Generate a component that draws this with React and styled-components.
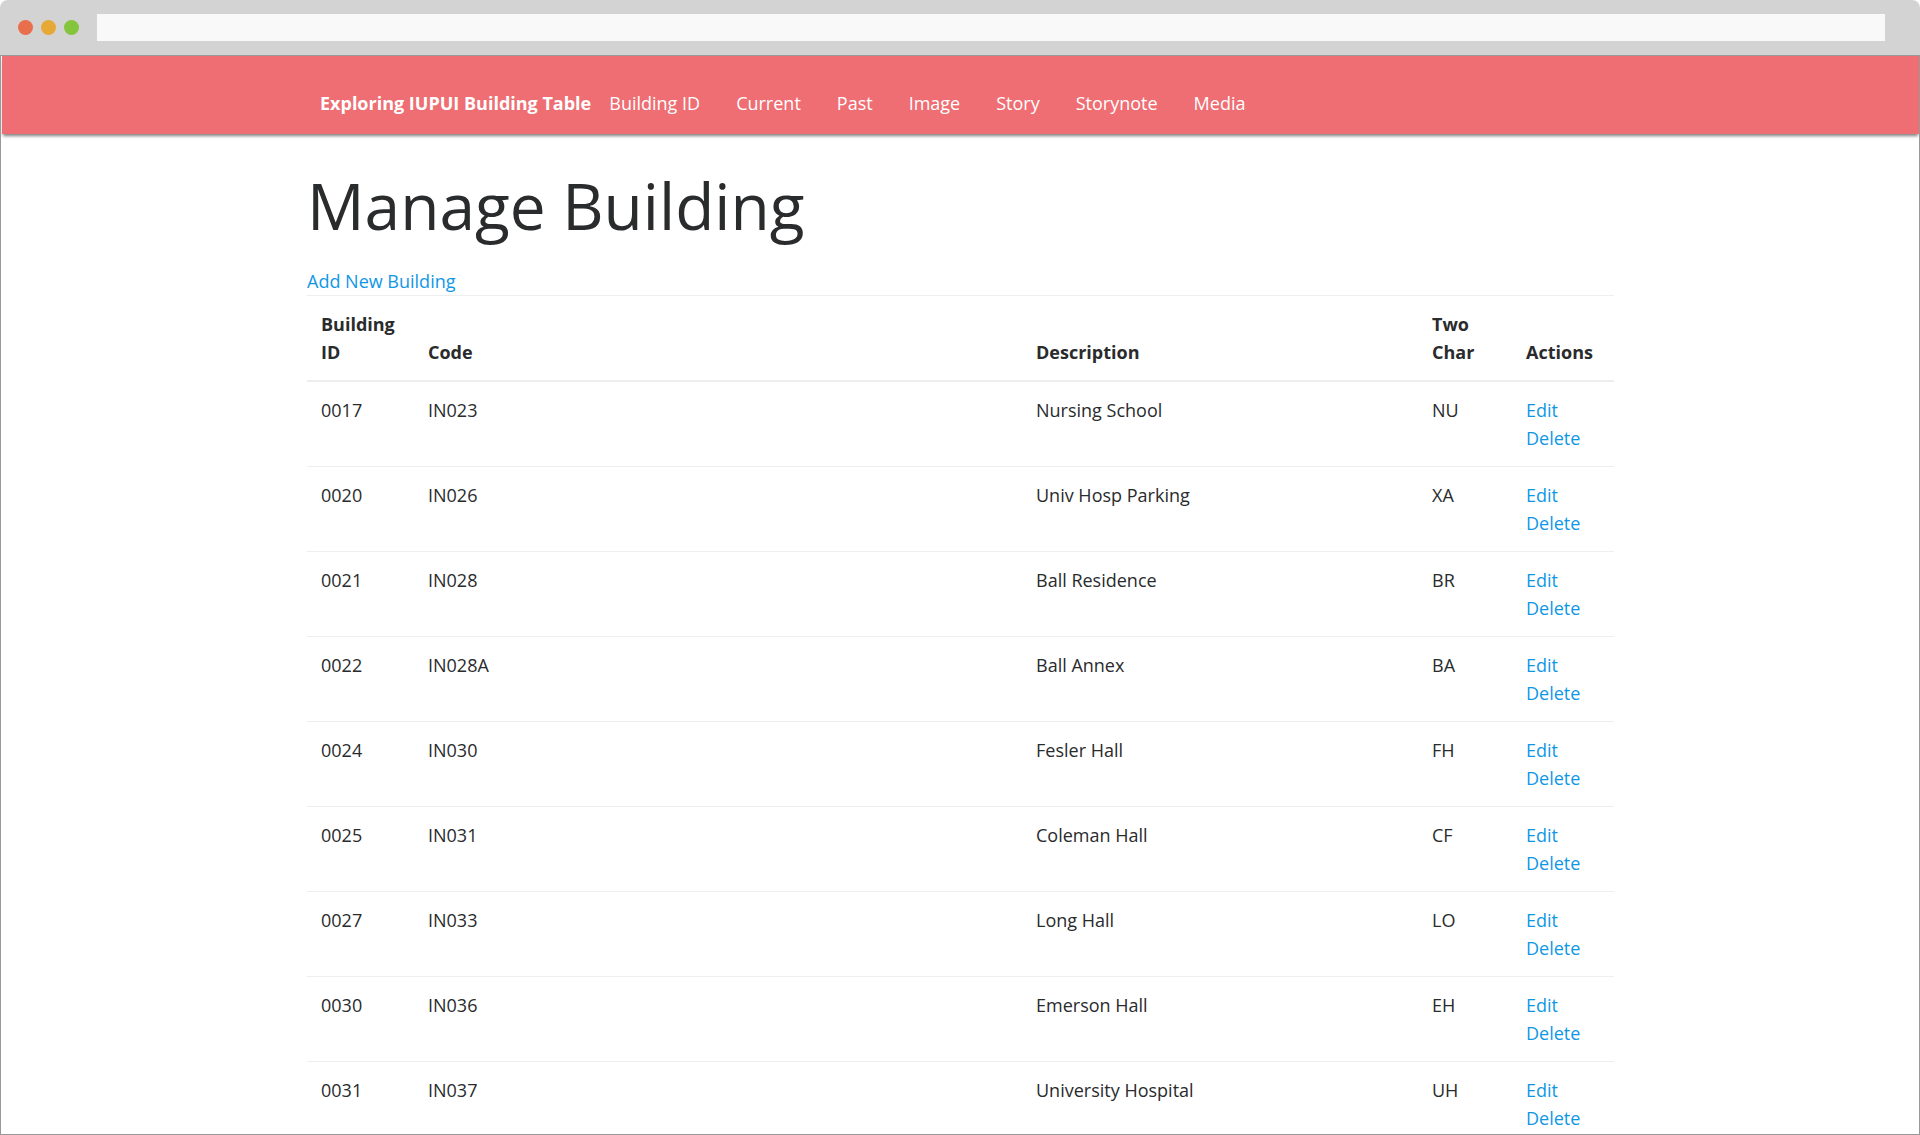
import React from "react";
import styled, { createGlobalStyle } from "styled-components";

const GlobalStyle = createGlobalStyle`
  *, *::before, *::after { box-sizing: border-box; }
  body {
    margin: 0;
    background: #fff;
    color: #292b2c;
    font-family: "Segoe UI", "Open Sans", "Noto Sans", sans-serif;
    font-size: 18px;
    line-height: 28px;
  }
`;

const BrowserWindow = styled.div`
  display: flex;
  flex-direction: column;
  height: 100vh;
  overflow: hidden;
`;

const TitleBar = styled.div`
  display: flex;
  flex: none;
  align-items: center;
  gap: 18px;
  padding: 14px 35px 14px 18px;
  background: #d3d3d3;
  border-bottom: 1px solid #999;
  border-radius: 8px 8px 0 0;
`;

const WindowControls = styled.div`
  display: flex;
  gap: 8px;
`;

const Dot = styled.button`
  width: 15px;
  height: 15px;
  padding: 0;
  border: 0;
  border-radius: 50%;
  background: ${(p) => p.$color};
`;

const AddressBar = styled.input`
  flex: 1;
  min-width: 0;
  height: 27px;
  padding: 0 8px;
  border: 0;
  background: #f9f9f9;
  font: inherit;
`;

const Viewport = styled.div`
  flex: 1;
  min-height: 0;
  overflow: hidden;
  padding-left: 1px;
  border: 1px solid #999;
  border-top: 0;
`;

const NavBar = styled.nav`
  padding: 33px 14px 17px;
  background: #ee6e73;
  color: #fff;
  box-shadow: 0 3px 3px -1px rgba(0, 0, 0, 0.5);
`;

const Container = styled.div`
  width: 100%;
  max-width: 1307px;
  margin: 0 auto;
`;

const NavInner = styled(Container)`
  display: flex;
  flex-wrap: wrap;
  padding: 0 13px;
`;

const Brand = styled.a`
  color: inherit;
  font-weight: 700;
  text-decoration: none;
`;

const NavList = styled.ul`
  display: flex;
  flex-wrap: wrap;
  margin: 0;
  padding: 0;
  list-style: none;
`;

const NavLink = styled.a`
  padding: 0 18px;
  color: inherit;
  text-decoration: none;
`;

const Title = styled.h1`
  margin: 0 0 22px;
  font-size: 64px;
  font-weight: 400;
  line-height: 78px;
`;

const Main = styled(Container).attrs({ as: "main" })`
  padding-top: 33px;
`;

const TextLink = styled.a`
  color: #0f97e6;
  text-decoration: none;
`;

const AddLink = styled(TextLink)`
  display: block;
`;

const Table = styled.table`
  width: 100%;
  table-layout: fixed;
  border-collapse: separate;
  border-spacing: 0;
`;

const Col = styled.col`
  width: ${(p) => p.$width || "auto"};
`;

const HeadCell = styled.th`
  padding: 14px;
  border-top: 1px solid #eceeef;
  border-bottom: 1px solid #eceeef;
  font-weight: 700;
  text-align: left;
  vertical-align: bottom;
`;

const Cell = styled.td`
  padding: 14px;
  border-top: 1px solid #eceeef;
  vertical-align: top;
`;

const navItems = ["Building ID", "Current", "Past", "Image", "Story", "Storynote", "Media"];

const columns = [
  { label: "Building ID", width: "107px" },
  { label: "Code" },
  { label: "Description", width: "396px" },
  { label: "Two Char", width: "94px" },
  { label: "Actions", width: "102px" },
];

const buildings = [
  ["0017", "IN023", "Nursing School", "NU"],
  ["0020", "IN026", "Univ Hosp Parking", "XA"],
  ["0021", "IN028", "Ball Residence", "BR"],
  ["0022", "IN028A", "Ball Annex", "BA"],
  ["0024", "IN030", "Fesler Hall", "FH"],
  ["0025", "IN031", "Coleman Hall", "CF"],
  ["0027", "IN033", "Long Hall", "LO"],
  ["0030", "IN036", "Emerson Hall", "EH"],
  ["0031", "IN037", "University Hospital", "UH"],
];

export default function App() {
  return (
    <>
      <GlobalStyle />
      <BrowserWindow>
        <TitleBar>
          <WindowControls>
            <Dot type="button" aria-label="Close" $color="#e96e4c" />
            <Dot type="button" aria-label="Minimize" $color="#e6a935" />
            <Dot type="button" aria-label="Maximize" $color="#85c43d" />
          </WindowControls>
          <AddressBar type="text" aria-label="Address" />
        </TitleBar>
        <Viewport>
          <NavBar>
            <NavInner>
              <Brand href="#">Exploring IUPUI Building Table</Brand>
              <NavList>
                {navItems.map((item) => (
                  <li key={item}>
                    <NavLink href="#">{item}</NavLink>
                  </li>
                ))}
              </NavList>
            </NavInner>
          </NavBar>
          <Main>
            <Title>Manage Building</Title>
            <AddLink href="#">Add New Building</AddLink>
            <Table>
              <colgroup>
                {columns.map((c) => (
                  <Col key={c.label} $width={c.width} />
                ))}
              </colgroup>
              <thead>
                <tr>
                  {columns.map((c) => (
                    <HeadCell key={c.label} scope="col">
                      {c.label}
                    </HeadCell>
                  ))}
                </tr>
              </thead>
              <tbody>
                {buildings.map((row) => (
                  <tr key={row[0]}>
                    {row.map((value) => (
                      <Cell key={value}>{value}</Cell>
                    ))}
                    <Cell>
                      <TextLink href="#">Edit</TextLink>
                      <br />
                      <TextLink href="#">Delete</TextLink>
                    </Cell>
                  </tr>
                ))}
              </tbody>
            </Table>
          </Main>
        </Viewport>
      </BrowserWindow>
    </>
  );
}
